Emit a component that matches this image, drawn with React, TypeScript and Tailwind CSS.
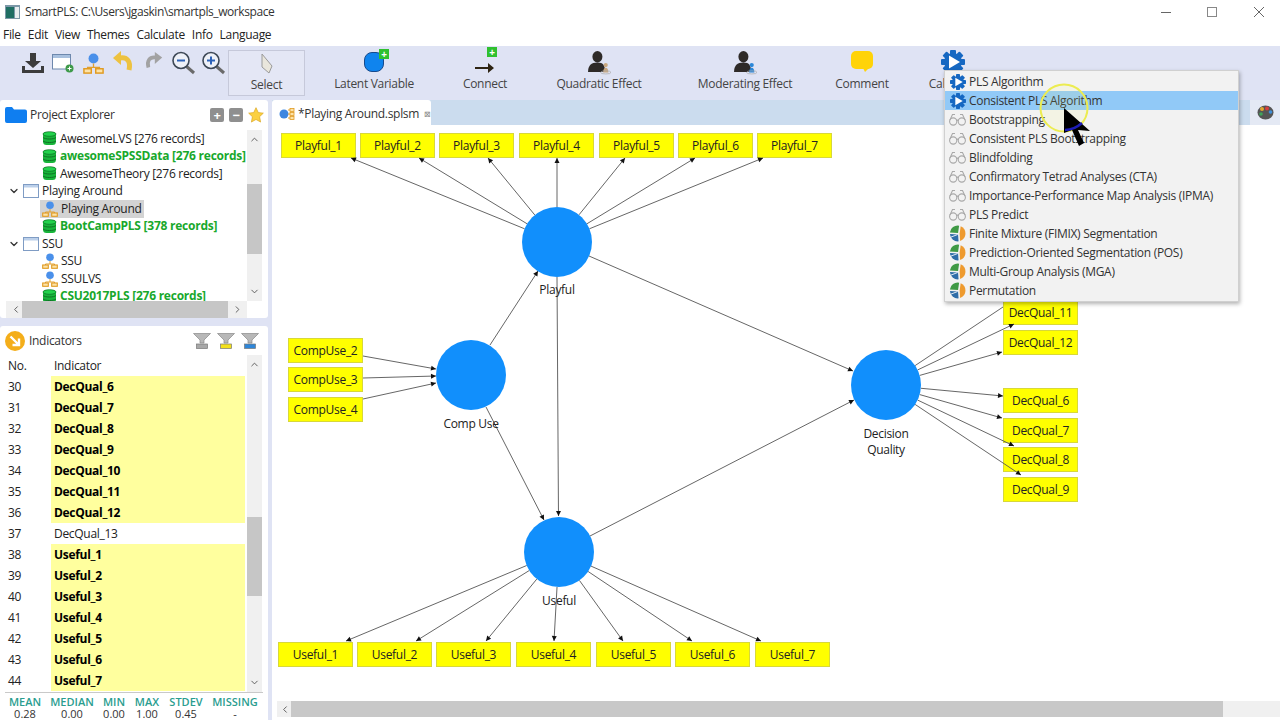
import { ChevronDown, ChevronLeft, ChevronRight, ChevronUp } from "lucide-react";

const CANVAS_X = 272;
const CANVAS_Y = 125;

type Box = { label: string; x: number; y: number; w?: number };

const boxes: Box[] = [
  { label: "Playful_1", x: 281, y: 133 },
  { label: "Playful_2", x: 360, y: 133 },
  { label: "Playful_3", x: 439, y: 133 },
  { label: "Playful_4", x: 519, y: 133 },
  { label: "Playful_5", x: 599, y: 133 },
  { label: "Playful_6", x: 678, y: 133 },
  { label: "Playful_7", x: 757, y: 133 },
  { label: "CompUse_2", x: 288, y: 338 },
  { label: "CompUse_3", x: 288, y: 367 },
  { label: "CompUse_4", x: 288, y: 397 },
  { label: "Useful_1", x: 278, y: 642 },
  { label: "Useful_2", x: 357, y: 642 },
  { label: "Useful_3", x: 436, y: 642 },
  { label: "Useful_4", x: 516, y: 642 },
  { label: "Useful_5", x: 596, y: 642 },
  { label: "Useful_6", x: 675, y: 642 },
  { label: "Useful_7", x: 755, y: 642 },
  { label: "DecQual_11", x: 1003, y: 300 },
  { label: "DecQual_12", x: 1003, y: 330 },
  { label: "DecQual_6", x: 1003, y: 388 },
  { label: "DecQual_7", x: 1003, y: 418 },
  { label: "DecQual_8", x: 1003, y: 447 },
  { label: "DecQual_9", x: 1003, y: 477 },
];

const circles = [
  { x: 557, y: 242, label: ["Playful"], ly: 290 },
  { x: 471, y: 375, label: ["Comp Use"], ly: 424 },
  { x: 886, y: 385, label: ["Decision", "Quality"], ly: 434 },
  { x: 559, y: 552, label: ["Useful"], ly: 601 },
];

const P = { x: 557, y: 242 };
const D = { x: 886, y: 385 };
const U = { x: 559, y: 552 };

// from the edge of a circle out to a tip
const out = (c: { x: number; y: number }, tx: number, ty: number, head = true) => {
  const a = Math.atan2(ty - c.y, tx - c.x);
  return { x1: c.x + 35 * Math.cos(a), y1: c.y + 35 * Math.sin(a), x2: tx, y2: ty, head };
};

const arrows = [
  out(P, 351, 158),
  out(P, 419, 158),
  out(P, 488, 158),
  out(P, 557, 158),
  out(P, 625, 158),
  out(P, 695, 158),
  out(P, 763, 158),
  out(U, 346, 641),
  out(U, 416, 641),
  out(U, 486, 641),
  out(U, 554, 641),
  out(U, 623, 641),
  out(U, 692, 641),
  out(U, 761, 641),
  out(D, 1003, 307, false),
  out(D, 1014, 324),
  out(D, 1002, 352),
  out(D, 1003, 396),
  out(D, 1002, 418),
  out(D, 1014, 446),
  out(D, 1021, 475),
  { x1: 589, y1: 256, x2: 853, y2: 371, head: true },
  { x1: 490, y1: 345, x2: 538, y2: 271, head: true },
  { x1: 486, y1: 407, x2: 544, y2: 520, head: true },
  { x1: 557, y1: 277, x2: 558.5, y2: 516, head: true },
  { x1: 590, y1: 536, x2: 854, y2: 400, head: true },
  { x1: 363, y1: 356, x2: 436, y2: 369, head: true },
  { x1: 363, y1: 378, x2: 436, y2: 376, head: true },
  { x1: 363, y1: 399, x2: 436, y2: 383, head: true },
];

const headPoints = (a: { x1: number; y1: number; x2: number; y2: number }) => {
  const t = Math.atan2(a.y2 - a.y1, a.x2 - a.x1);
  const bx = a.x2 - 5 * Math.cos(t);
  const by = a.y2 - 5 * Math.sin(t);
  const nx = -Math.sin(t) * 2.5;
  const ny = Math.cos(t) * 2.5;
  return `${a.x2},${a.y2} ${bx + nx},${by + ny} ${bx - nx},${by - ny}`;
};

const Gear = ({ size = 16 }: { size?: number }) => (
  <svg width={size} height={size} viewBox="0 0 24 24">
    {[0, 45, 90, 135].map((r) => (
      <rect key={r} x="9" y="0" width="6" height="24" rx="1" fill="#1668c2" transform={`rotate(${r} 12 12)`} />
    ))}
    <circle cx="12" cy="12" r="9" fill="#1668c2" />
    <polygon points="8,5.5 19,12 8,18.5" fill="#fff" />
  </svg>
);

const Glasses = () => (
  <svg width="17" height="13" viewBox="0 0 17 13" fill="none" stroke="#a9a9a9" strokeWidth="1.1">
    <circle cx="4.200" cy="8.500" r="3.600" />
    <circle cx="12.800" cy="8.500" r="3.600" />
    <path d="M7.500 7.500c.6-.5 1.400-.5 2 0M1 7 3.500 1.500h2.500M16 7 13.500 1.500H11" />
  </svg>
);

const Pie = () => (
  <svg width="17" height="17" viewBox="0 0 16 16">
    <path d="M8.500 7.500 .8 7A7.400 7.400 0 0 1 9.500 .7Z" fill="#3f9a45" />
    <path d="M10 8 11 1.200A7.400 7.400 0 0 1 10.500 15Z" fill="#ee9a2e" />
    <path d="M8.500 9 .9 8.500A7.400 7.400 0 0 0 9 15.400Z" fill="#2f6da8" />
    <path d="M1.500 11.500 8 9" stroke="#fff" strokeWidth="0.8" />
  </svg>
);

const Db = () => (
  <svg width="15" height="15" viewBox="0 0 15 15">
    <rect x="1" y="1" width="13" height="13" rx="3.5" fill="#17b53a" />
    <ellipse cx="7.5" cy="3" rx="6.5" ry="2.3" fill="#22d24c" stroke="#0d6b22" strokeWidth="0.7" />
    <path d="M1 6.5c2 2 11 2 13 0M1 10c2 2 11 2 13 0" stroke="#0d6b22" fill="none" strokeWidth="0.9" />
  </svg>
);

const TreeIcon = ({ size = 16 }: { size?: number }) => (
  <svg width={size} height={size} viewBox="0 0 16 16">
    <circle cx="8" cy="4.200" r="3.800" fill="#4a90ea" />
    <path d="M8 8v3M3.500 13v-2h9v2" stroke="#e0a030" fill="none" strokeWidth="1" />
    <rect x="0.700" y="12" width="5.600" height="3.300" fill="#fde3a8" stroke="#e09a20" strokeWidth="1.100" />
    <rect x="9.700" y="12" width="5.600" height="3.300" fill="#fde3a8" stroke="#e09a20" strokeWidth="1.100" />
  </svg>
);

const WindowIcon = () => (
  <svg width="16" height="14" viewBox="0 0 16 14">
    <rect x="0.5" y="0.5" width="15" height="13" fill="#fff" stroke="#7f9cc4" />
    <rect x="1" y="1" width="14" height="2.5" fill="#bcd0ea" />
  </svg>
);

const Funnel = ({ color }: { color: string }) => (
  <svg width="18" height="18" viewBox="0 0 18 18">
    <path d="M0.5 1.5h17L11 8v3H7V8Z" fill="#b8b8b8" stroke="#8a8a8a" strokeWidth="0.7" />
    <rect x="3.5" y="12" width="11" height="4.5" fill={color} stroke="#777" strokeWidth="0.7" />
  </svg>
);

const PlusBadge = () => (
  <span className="absolute -top-[4px] -right-[6px] flex h-[10px] w-[10px] items-center justify-center bg-[#2fc02f] text-[10px] leading-none font-bold text-white">
    +
  </span>
);

const Person = ({ color }: { color: string }) => (
  <svg width="25" height="25" viewBox="0 0 24 24">
    <ellipse cx="10" cy="6.500" rx="4.800" ry="5.500" fill="#2e2a28" />
    <path d="M1 21c0-6 3-9 9-9s7 3 7.500 9Z" fill="#2e2a28" />
    <circle cx="18" cy="14.500" r="2" fill={color} />
    <path d="M15.500 21.500c0-3 1-4.500 2.500-4.500s2.500 1.500 2.500 4.500Z" fill={color} />
    <ellipse cx="18" cy="21.500" rx="5" ry="1.500" fill="none" stroke="#a9a9a9" strokeWidth="0.7" />
  </svg>
);

const ZoomIcon = ({ plus }: { plus?: boolean }) => (
  <svg width="24" height="24" viewBox="0 0 24 24">
    <path d="M15 15 23 22" stroke="#6a6a6a" strokeWidth="3" />
    <circle cx="10" cy="9.500" r="8" fill="#eef1f8" stroke="#3d4856" strokeWidth="1.600" />
    <path d="M6 9.500h8" stroke="#2d62b8" strokeWidth="2" />
    {plus && <path d="M10 5.500v8" stroke="#2d62b8" strokeWidth="2" />}
  </svg>
);

const smallTools = [
  <svg key="a" width="24" height="22" viewBox="0 0 24 22">
    <path d="M9 1h6v8h5l-8 7-8-7h5Z" fill="#3c3c3c" />
    <path d="M1 14v7h22v-7h-3v4H4v-4Z" fill="#3c3c3c" />
  </svg>,
  <svg key="b" width="22" height="20" viewBox="0 0 22 20">
    <rect x="0.5" y="1.500" width="18" height="14.500" fill="#fff" stroke="#6d88ad" />
    <rect x="1" y="2" width="17" height="3" fill="#a8c0de" />
    <circle cx="17.500" cy="15.500" r="4" fill="#3e9a4a" />
    <path d="M15.500 15.500h4M17.500 13.500v4" stroke="#fff" strokeWidth="1" />
  </svg>,
  <TreeIcon key="c" size={21} />,
  <svg key="d" width="24" height="24" viewBox="0 0 24 24">
    <path d="M9 7c7-1 11 3 9 12" fill="none" stroke="#edc240" strokeWidth="5" />
    <polygon points="10,0 10,14 2,7" fill="#edc240" />
  </svg>,
  <svg key="e" width="22" height="22" viewBox="0 0 24 24">
    <path d="M15 6c-7-1-10 4-8 11" fill="none" stroke="#a2a2a2" strokeWidth="4" />
    <polygon points="14,0 14,13 22,6" fill="#a2a2a2" />
  </svg>,
  <ZoomIcon key="f" />,
  <ZoomIcon key="g" plus />,
];

const bigTools = [
  {
    label: "Latent Variable",
    w: "w-[138px]",
    icon: (
      <span className="relative block h-[20px] w-[20px] rounded-[8px] border border-[#174a8c] bg-[#0f84ee]">
        <PlusBadge />
      </span>
    ),
  },
  {
    label: "Connect",
    w: "w-[84px]",
    icon: (
      <span className="relative flex h-[22px] w-[22px] items-end justify-center">
        <svg width="20" height="10" viewBox="0 0 20 10">
          <path d="M0 4h13V0l6 5-6 5V6H0Z" fill="#2e2413" />
        </svg>
        <span className="absolute top-[-4px] right-[-1px] flex h-[10px] w-[10px] items-center justify-center bg-[#2fc02f] text-[10px] leading-none font-bold text-white">
          +
        </span>
      </span>
    ),
  },
  { label: "Quadratic Effect", w: "w-[144px]", icon: <Person color="#c9a77f" /> },
  { label: "Moderating Effect", w: "w-[148px]", icon: <Person color="#2a86d8" /> },
  {
    label: "Comment",
    w: "w-[86px]",
    icon: (
      <svg width="24" height="24" viewBox="0 0 24 24">
        <rect x="1" y="1" width="22" height="18" rx="5" fill="#ffd308" />
        <polygon points="13,18 19,18 15,22" fill="#ffd308" />
      </svg>
    ),
  },
  { label: "Calculate", w: "w-[96px]", icon: <Gear size={24} /> },
];

const tree = [
  { text: "AwesomeLVS [276 records]", icon: "db", level: 2 },
  { text: "awesomeSPSSData [276 records]", icon: "db", level: 2, green: true },
  { text: "AwesomeTheory [276 records]", icon: "db", level: 2 },
  { text: "Playing Around", icon: "win", level: 1 },
  { text: "Playing Around", icon: "tree", level: 2, selected: true },
  { text: "BootCampPLS [378 records]", icon: "db", level: 2, green: true },
  { text: "SSU", icon: "win", level: 1 },
  { text: "SSU", icon: "tree", level: 2 },
  { text: "SSULVS", icon: "tree", level: 2 },
  { text: "CSU2017PLS [276 records]", icon: "db", level: 2, green: true },
];

const indicators = [
  "DecQual_6", "DecQual_7", "DecQual_8", "DecQual_9", "DecQual_10", "DecQual_11", "DecQual_12", "DecQual_13",
  "Useful_1", "Useful_2", "Useful_3", "Useful_4", "Useful_5", "Useful_6", "Useful_7",
];

const stats = [
  { k: "MEAN", v: "0.28", w: "w-[40px]" },
  { k: "MEDIAN", v: "0.00", w: "w-[54px]" },
  { k: "MIN", v: "0.00", w: "w-[30px]" },
  { k: "MAX", v: "1.00", w: "w-[36px]" },
  { k: "STDEV", v: "0.45", w: "w-[42px]" },
  { k: "MISSING", v: "-", w: "w-[56px]" },
];

const menuItems = [
  { t: "PLS Algorithm", i: "gear" },
  { t: "Consistent PLS Algorithm", i: "gear", active: true },
  { t: "Bootstrapping", i: "glass" },
  { t: "Consistent PLS Bootstrapping", i: "glass" },
  { t: "Blindfolding", i: "glass" },
  { t: "Confirmatory Tetrad Analyses (CTA)", i: "glass" },
  { t: "Importance-Performance Map Analysis (IPMA)", i: "glass" },
  { t: "PLS Predict", i: "glass" },
  { t: "Finite Mixture (FIMIX) Segmentation", i: "pie" },
  { t: "Prediction-Oriented Segmentation (POS)", i: "pie" },
  { t: "Multi-Group Analysis (MGA)", i: "pie" },
  { t: "Permutation", i: "pie" },
];

const VScroll = ({ spacer, thumb }: { spacer: string; thumb: string }) => (
  <div className="flex w-[15px] shrink-0 flex-col items-center bg-[#f0f0f0] text-[#555]">
    <ChevronUp size={11} className="mt-[4px] shrink-0" />
    <div className={`w-full shrink-0 ${spacer}`} />
    <div className={`w-full shrink-0 bg-[#c6c6c6] ${thumb}`} />
    <div className="flex-1" />
    <ChevronDown size={11} className="mb-[4px] shrink-0" />
  </div>
);

export default function App() {
  return (
    <div className="relative h-[720px] w-[1280px] overflow-hidden bg-white font-['Open_Sans',sans-serif] text-[12px] tracking-[-0.3px] text-[#222]">
      {/* Title bar */}
      <div className="flex h-[24px] items-center pl-[5px]">
        <svg width="15" height="14" viewBox="0 0 15 14">
          <rect width="15" height="14" fill="#7d98a8" />
          <rect x="1" y="2" width="8" height="11" fill="#1f6e63" />
          <rect x="10" y="2" width="4" height="11" fill="#e8eef0" />
        </svg>
        <span className="ml-[5px] tracking-[-0.42px] text-[#333]">{"SmartPLS: C:\\Users\\jgaskin\\smartpls_workspace"}</span>
        <div className="ml-auto flex items-center">
          <div className="h-px w-[10px] bg-[#666]" />
          <div className="ml-[36px] h-[10px] w-[10px] border border-[#888]" />
          <svg className="mr-[16px] ml-[37px]" width="10" height="10" viewBox="0 0 10 10">
            <path d="M0 0 10 10M10 0 0 10" stroke="#666" />
          </svg>
        </div>
      </div>

      {/* Menu bar */}
      <div className="flex h-[22px] items-center gap-[7px] pl-[3px] text-[#222]">
        {["File", "Edit", "View", "Themes", "Calculate", "Info", "Language"].map((m) => (
          <span key={m}>{m}</span>
        ))}
      </div>

      {/* Toolbar */}
      <div className="flex h-[52px] bg-[#dfe3f4] pl-[18px] text-[#444]">
        {smallTools.map((t, i) => (
          <div key={i} className="flex h-[33px] w-[30px] items-center justify-center pt-[1px]">
            {t}
          </div>
        ))}
        <div className="mt-[4px] flex h-[46px] w-[77px] flex-col items-center border border-[#c6c9da] bg-[#e4e7f5]">
          <svg className="mt-[2px]" width="14" height="22" viewBox="0 0 14 22">
            <path d="M2 1 12 13 9 20 2 14Z" fill="#e9e6dc" stroke="#9a9a9a" />
          </svg>
          <span className="mt-[1px]">Select</span>
        </div>
        {bigTools.map((t) => (
          <div key={t.label} className={`flex flex-col items-center pt-[4px] ${t.w}`}>
            <div className="flex h-[24px] items-center">{t.icon}</div>
            <span className="mt-[1px]">{t.label}</span>
          </div>
        ))}
      </div>

      {/* Body */}
      <div className="flex h-[622px] gap-[4px] bg-[#dfe3f4] pt-[2px]">
        <div className="flex w-[268px] flex-col gap-[8px]">
          {/* Project Explorer */}
          <section className="flex h-[218px] flex-col rounded-[3px] bg-white">
            <div className="flex h-[30px] shrink-0 items-center pr-[4px] pl-[5px]">
              <svg width="22" height="16" viewBox="0 0 22 16">
                <path d="M0 2q0-2 2-2h5l2 2.500h11q2 0 2 2V14q0 2-2 2H2q-2 0-2-2Z" fill="#0f7ef0" />
              </svg>
              <span className="ml-[3px] text-[#333]">Project Explorer</span>
              <div className="ml-auto flex items-center gap-[5px]">
                <span className="flex h-[14px] w-[14px] items-center justify-center rounded-[2px] bg-[#8f8f8f] text-[13px] leading-none font-bold text-white">+</span>
                <span className="flex h-[14px] w-[14px] items-center justify-center rounded-[2px] bg-[#8f8f8f] text-[13px] leading-none font-bold text-white">−</span>
                <svg width="16" height="16" viewBox="0 0 24 24">
                  <path d="M12 1l3.400 7.300 7.600.9-5.600 5.400 1.500 8L12 18.700 5.100 22.600l1.500-8L1 9.200l7.600-.9Z" fill="#fbd040" stroke="#d9a520" />
                </svg>
              </div>
            </div>
            <div className="flex h-[171px] shrink-0 overflow-hidden pl-[6px]">
              <div className="w-[241px] shrink-0 overflow-hidden">
                {tree.map((r, i) => (
                  <div key={i} className="flex h-[17.5px] items-center whitespace-nowrap">
                    {r.level === 1 ? (
                      <>
                        <ChevronDown size={12} strokeWidth={2.5} className="ml-[2px] text-[#333]" />
                        <span className="ml-[3px] flex w-[16px] justify-center"><WindowIcon /></span>
                        <span className="ml-[3px]">{r.text}</span>
                      </>
                    ) : (
                      <span className={`ml-[34px] flex h-full items-center pr-[2px] ${r.selected ? "bg-[#d3d3d3]" : ""}`}>
                        <span className="mr-[3px] ml-[2px] flex">{r.icon === "db" ? <Db /> : <TreeIcon />}</span>
                        <span className={r.green ? "font-bold tracking-[-0.24px] text-[#18a82c]" : ""}>{r.text}</span>
                      </span>
                    )}
                  </div>
                ))}
              </div>
              <VScroll spacer="h-[39px]" thumb="h-[70px]" />
            </div>
            <div className="flex h-[17px] shrink-0 items-stretch pl-[6px]">
              <div className="flex w-[241px] items-center bg-[#f0f0f0] text-[#555]">
                <ChevronLeft size={11} className="ml-[4px] w-[12px]" />
                <div className="h-full w-[206px] bg-[#c6c6c6]" />
                <ChevronRight size={11} className="ml-[4px]" />
              </div>
            </div>
          </section>

          {/* Indicators */}
          <section className="flex h-[394px] flex-col rounded-t-[3px] bg-white">
            <div className="flex h-[29px] shrink-0 items-center pr-[9px] pl-[5px]">
              <svg width="20" height="20" viewBox="0 0 20 20">
                <circle cx="10" cy="10" r="10" fill="#f4ae1a" />
                <path d="M5.500 5.500 13 13M14 7.500V14H7.500" stroke="#fff" strokeWidth="2.400" fill="none" />
              </svg>
              <span className="ml-[4px] text-[#333]">Indicators</span>
              <div className="ml-auto flex gap-[6px]">
                <Funnel color="#a8a8a8" />
                <Funnel color="#f3e01c" />
                <Funnel color="#2e86d8" />
              </div>
            </div>
            <div className="flex h-[337px] shrink-0 pl-[5px]">
              <div className="w-[240px] shrink-0">
                <div className="flex h-[21px] items-center">
                  <span className="w-[46px] pl-[3px]">No.</span>
                  <span className="pl-[3px]">Indicator</span>
                </div>
                {indicators.map((name, i) => (
                  <div key={name} className="flex h-[21px] items-center">
                    <span className="w-[46px] pl-[3px]">{30 + i}</span>
                    <span className={`flex h-full flex-1 items-center pl-[3px] ${name === "DecQual_13" ? "" : "bg-[#ffff9e] font-bold text-black"}`}>
                      {name}
                    </span>
                  </div>
                ))}
              </div>
              <div className="ml-[2px] flex">
                <VScroll spacer="h-[147px]" thumb="h-[79px]" />
              </div>
            </div>
            <div className="mx-[5px] flex h-[28px] shrink-0 border-t border-[#c9c9c9] pt-[3px] text-center leading-[12px] tracking-normal">
              {stats.map((s) => (
                <div key={s.k} className={s.w}>
                  <div className="text-[11px] font-semibold text-[#2a9d8f]">{s.k}</div>
                  <div className="text-[11px] text-[#333]">{s.v}</div>
                </div>
              ))}
            </div>
          </section>
        </div>

        {/* Editor */}
        <section className="flex w-[1008px] flex-col rounded-t-[3px] bg-white">
          <div className="flex h-[25px] shrink-0 bg-[#cbdcee]">
            <div className="flex w-[159px] items-center rounded-t-[3px] bg-white pt-[2px] pl-[7px]">
              <svg width="16" height="16" viewBox="0 0 16 16">
                <circle cx="5" cy="8" r="4.500" fill="#3d86e0" />
                <path d="M9 4h2M9 8h2M9 12h2" stroke="#e0a030" />
                <rect x="11" y="2.500" width="4" height="3" fill="#fde3a8" stroke="#e09a20" strokeWidth="0.800" />
                <rect x="11" y="6.500" width="4" height="3" fill="#fde3a8" stroke="#e09a20" strokeWidth="0.800" />
                <rect x="11" y="10.500" width="4" height="3" fill="#fde3a8" stroke="#e09a20" strokeWidth="0.800" />
              </svg>
              <span className="ml-[3px] text-[#333]">*Playing Around.splsm</span>
              <span className="ml-[5px] text-[8px] text-[#888]">⊠</span>
            </div>
            <div className="ml-auto flex h-full w-[30px] items-center justify-center bg-[#e4e9f4]">
              <svg width="17" height="15" viewBox="0 0 17 15">
                <ellipse cx="8.500" cy="7.500" rx="8" ry="7" fill="#555" />
                <circle cx="5" cy="4" r="2" fill="#e2a72e" />
                <circle cx="10" cy="3.500" r="2" fill="#d63f3f" />
                <circle cx="13.500" cy="7" r="1.800" fill="#3f8fd8" />
                <circle cx="4" cy="9" r="1.800" fill="#3fa45a" />
              </svg>
            </div>
          </div>

          <div className="relative h-[576px] shrink-0 overflow-hidden">
            {boxes.map((b) => (
              <div
                key={b.label}
                className="absolute flex h-[25px] w-[75px] items-center justify-center border border-[#d8d83a] bg-[#ffff00] text-[#222]"
                style={{ left: b.x - CANVAS_X, top: b.y - CANVAS_Y }}
              >
                {b.label}
              </div>
            ))}
            <svg className="absolute inset-0" width="1008" height="576" viewBox={`${CANVAS_X} ${CANVAS_Y} 1008 576`}>
              {arrows.map((a, i) => (
                <g key={i}>
                  <line x1={a.x1} y1={a.y1} x2={a.x2} y2={a.y2} stroke="#555" strokeWidth="0.9" />
                  {a.head && <polygon points={headPoints(a)} fill="#111" />}
                </g>
              ))}
            </svg>
            {circles.map((c) => (
              <div key={c.label[0]}>
                <div
                  className="absolute h-[70px] w-[70px] rounded-full bg-[#118ffc]"
                  style={{ left: c.x - 35 - CANVAS_X, top: c.y - 35 - CANVAS_Y }}
                />
                <div
                  className="absolute w-[100px] text-center leading-[16px] text-[#222]"
                  style={{ left: c.x - 50 - CANVAS_X, top: c.ly - 8 - CANVAS_Y }}
                >
                  {c.label.map((l) => (
                    <div key={l}>{l}</div>
                  ))}
                </div>
              </div>
            ))}
          </div>

          <div className="flex h-[16px] shrink-0 items-center pl-[5px]">
            <div className="flex h-full flex-1 items-center bg-[#f0f0f0] text-[#555]">
              <ChevronLeft size={11} className="ml-[2px] w-[12px]" />
              <div className="h-full w-[932px] bg-[#c8c8c8]" />
            </div>
          </div>
          <div className="flex-1" />
        </section>
      </div>

      {/* Calculate dropdown */}
      <div className="absolute top-[70px] left-[944px] w-[295px] border border-[#d0d0d0] bg-[#f2f2f2] pt-px pb-px shadow-[1px_2px_4px_rgba(0,0,0,0.3)]">
        {menuItems.map((m) => (
          <div key={m.t} className={`flex h-[19px] items-center ${m.active ? "bg-[#91c9f7]" : ""}`}>
            <span className="flex w-[24px] shrink-0 justify-center pl-[1px]">
              {m.i === "gear" && <Gear />}
              {m.i === "glass" && <Glasses />}
              {m.i === "pie" && <Pie />}
            </span>
            <span className="text-[#333]">{m.t}</span>
          </div>
        ))}
      </div>

      {/* Mouse pointer with its highlight */}
      <svg className="absolute top-[80px] left-[1036px]" width="60" height="70" viewBox="0 0 60 70">
        <circle cx="28" cy="28" r="23.500" fill="#ffff70" fillOpacity="0.1" stroke="#ecec50" strokeWidth="2" />
        <path d="M28 28V53L36 50 43 66 48 63 42 50 54 51Z" fill="#000" />
        <path d="M29 50Q38 50 46 43" stroke="#1d1db8" strokeWidth="2.500" fill="none" />
      </svg>
    </div>
  );
}
